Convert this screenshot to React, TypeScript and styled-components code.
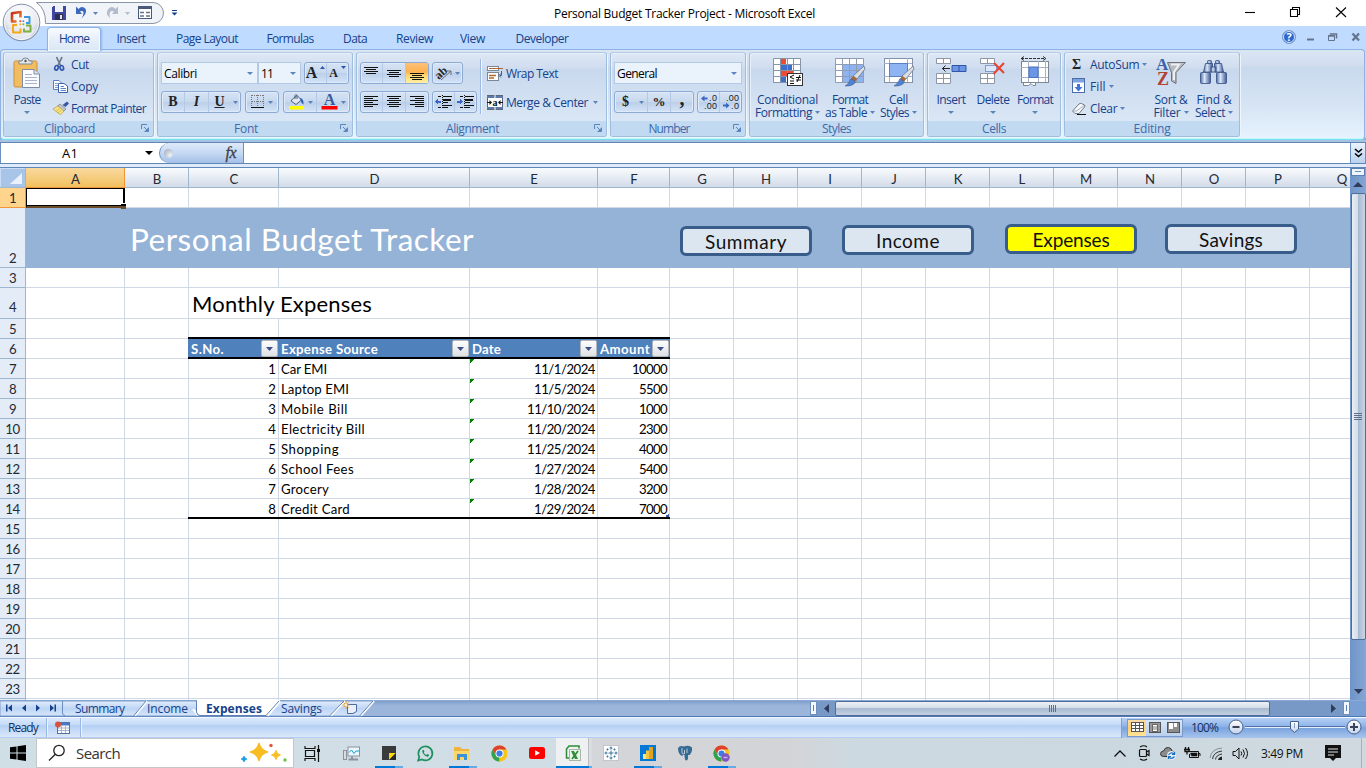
import React, { useLayoutEffect, useRef, useState } from "react";
import styled, { createGlobalStyle, css } from "styled-components";

const UI = `"Open Sans", "Noto Sans", sans-serif`;
const SHEET = `Lato, "Open Sans", sans-serif`;

const GlobalStyle = createGlobalStyle`
  * { box-sizing: border-box; }
  body { margin: 0; overflow: hidden; background: #fff; font-family: ${UI}; font-size: 12px; color: #15428b; }
  svg { display: block; flex: none; overflow: visible; }
`;

/* ---------- text that keeps to a fixed measure ---------- */
const FitSpan = styled.span`
  display: inline-block;
  white-space: pre;
  flex: none;
`;

function Fit({ w, children }: { w: number; children: string }) {
  const ref = useRef<HTMLSpanElement>(null);
  const [gap, setGap] = useState(0);
  useLayoutEffect(() => {
    if (ref.current) {
      const natural = ref.current.getBoundingClientRect().width;
      setGap((w - natural) / children.length);
    }
  }, []);
  return (
    <FitSpan ref={ref} style={{ letterSpacing: gap }}>
      {children}
    </FitSpan>
  );
}

const Window = styled.div`
  width: 1366px;
  height: 768px;
  display: flex;
  flex-direction: column;
  position: relative;
  overflow: hidden;
`;

/* ---------- title bar ---------- */
const TitleBar = styled.header`
  height: 26px;
  flex: none;
  display: flex;
  align-items: center;
  background: #fff;
`;
const QuickAccess = styled.div`
  width: 545px;
  height: 26px;
  padding-left: 35px;
`;
const Title = styled.div`
  flex: 1;
  color: #000;
  padding: 1px 0 0 9px;
`;
const WindowControls = styled.div`
  width: 122px;
  height: 26px;
`;
const OfficeOrb = styled.div`
  position: absolute;
  left: 2px;
  top: 3px;
`;

/* ---------- ribbon tabs ---------- */
const TabStrip = styled.nav`
  height: 23px;
  flex: none;
  background: #bfdbff;
  display: flex;
  align-items: stretch;
  padding-left: 47px;
`;
const Tab = styled.div<{ $w: number; $active?: boolean }>`
  width: ${(p) => p.$w}px;
  display: flex;
  align-items: center;
  justify-content: center;
  margin-top: 1px;
  padding-top: 1px;
  ${(p) =>
    p.$active &&
    css`
      border: 1px solid #8db2e3;
      border-bottom: 0;
      border-radius: 4px 4px 0 0;
      background: linear-gradient(#f8fbff, #e6effa 50%, #dbe7f6);
      box-shadow: inset 0 0 0 1px #f3fbff, 1px 0 2px #94b9e6;
      position: relative;
      height: 24px;
      z-index: 1;
      padding: 0 0 2px;
    `}
`;
const TabGap = styled.div`
  flex: 1;
`;
const MdiControls = styled.div`
  width: 90px;
`;

/* ---------- ribbon ---------- */
const RibbonArea = styled.div`
  height: 93px;
  flex: none;
  background: linear-gradient(#bfdbff 0 88px, #84a6cc 90px, #b2cbea 92px, #9fbadb);
  padding: 0 1px 0 0;
`;
const Ribbon = styled.div`
  height: 91px;
  border: 1px solid #8db2e3;
  border-bottom: 1px solid #7ae0ed;
  border-radius: 4px;
  background: linear-gradient(#dbe6f4 0, #cfddef 16px, #c9d9ed 17px, #d7e5f5 58px, #e7f4fe 90px);
  box-shadow: inset 0 -1px 0 #c5f7fc;
  display: flex;
  gap: 3px;
  padding: 2px 2px 0;
`;
const Group = styled.section<{ $w: number }>`
  width: ${(p) => p.$w}px;
  height: 85px;
  flex: none;
  border: 1px solid #9fbdde;
  border-top-color: #b7cbe2;
  border-radius: 3px;
  box-shadow: 1px 1px 0 #eef6fd, inset 1px 1px 0 #e6f0fa;
  background: linear-gradient(#dee8f5 0, #d0ddef 15px, #c8d8ed 16px, #d9e6f5 67px);
  display: flex;
  flex-direction: column;
`;
const GroupBody = styled.div<{ $pad?: string }>`
  height: 68px;
  display: flex;
  padding: ${(p) => p.$pad ?? "0"};
`;
const GroupLabel = styled.div<{ $launch?: boolean }>`
  height: 15px;
  background: #c1d9f1;
  color: #3e6aaa;
  display: flex;
  align-items: center;
  justify-content: center;
  position: relative;
  border-radius: 0 0 3px 3px;
  padding-right: ${(p) => (p.$launch ? 18 : 0)}px;
`;
const Launcher = styled.div`
  position: absolute;
  right: 4px;
  top: 3px;
`;
const Col = styled.div<{ $gap?: number; $pad?: string }>`
  display: flex;
  flex-direction: column;
  gap: ${(p) => p.$gap ?? 0}px;
  padding: ${(p) => p.$pad ?? "0"};
`;
const Row = styled.div<{ $gap?: number; $pad?: string }>`
  display: flex;
  gap: ${(p) => p.$gap ?? 0}px;
  padding: ${(p) => p.$pad ?? "0"};
`;
const BigButton = styled.div<{ $w: number }>`
  width: ${(p) => p.$w}px;
  flex: none;
  display: flex;
  flex-direction: column;
  align-items: center;
  padding-top: 4px;
`;
const BigIcon = styled.div`
  height: 36px;
  padding-top: 1px;
`;
const BigLine = styled.div`
  height: 13px;
  line-height: 13px;
  display: flex;
  align-items: center;
  gap: 3px;
  white-space: nowrap;
`;
const SmallButton = styled.div`
  height: 22px;
  display: flex;
  align-items: center;
  white-space: nowrap;
`;
const SmallIcon = styled.div<{ $w?: number }>`
  width: ${(p) => p.$w ?? 18}px;
`;
const Combo = styled.div<{ $w: number }>`
  width: ${(p) => p.$w}px;
  height: 22px;
  border: 1px solid #b3cae7;
  background: #eaf2fb;
  color: #000;
  display: flex;
  align-items: center;
  justify-content: space-between;
  padding: 0 4px 0 2px;
`;
const ButtonSet = styled.div`
  height: 22px;
  display: flex;
  border: 1px solid #8daad2;
  border-radius: 3px;
  background: linear-gradient(#d6e3f4, #c8d9ee 48%, #bccfe9 50%, #d3e3f8);
  box-shadow: inset 0 0 0 1px #dfeafa;
`;
const SetItem = styled.div<{ $w: number; $on?: boolean; $flat?: boolean }>`
  width: ${(p) => p.$w}px;
  display: flex;
  align-items: center;
  justify-content: center;
  gap: 3px;
  border-right: ${(p) => (p.$flat ? "0" : "1px solid #b4c9e6")};
  &:last-child { border-right: 0; }
  ${(p) => p.$on && css`background: linear-gradient(#fcc17a, #fdb04e 45%, #fed469 60%, #fff0a4);`}
`;
const Divider = styled.div`
  width: 1px;
  height: 55px;
  margin: 6px 6px 0 3px;
  background: #9dbbe0;
  box-shadow: 1px 0 0 #eef5fc;
`;
const Serif = styled.span<{ $size: number; $italic?: boolean; $u?: boolean; $lift?: number }>`
  font: ${(p) => (p.$italic ? "italic" : "normal")} bold ${(p) => p.$size}px "Liberation Serif", serif;
  color: #222;
  text-decoration: ${(p) => (p.$u ? "underline" : "none")};
  padding-bottom: ${(p) => p.$lift ?? 0}px;
`;

/* ---------- formula bar ---------- */
const FormulaBar = styled.div`
  height: 22px;
  flex: none;
  display: flex;
  border-top: 1px solid #5f86b6;
  border-bottom: 1px solid #5f86b6;
  background: #fff;
`;
const NameBox = styled.div`
  width: 159px;
  border-left: 1px solid #6a8fc0;
  display: flex;
  align-items: center;
  justify-content: flex-end;
  gap: 67px;
  padding-right: 6px;
  color: #000;
  font: 13px ${UI};
`;
const FxBox = styled.div`
  width: 85px;
  border: solid #6a8fc0;
  border-width: 0 1px 0 1px;
  border-radius: 11px 0 0 11px;
  background: linear-gradient(#dfeafa, #c5d9f3 50%, #a3c0e8);
  display: flex;
  align-items: center;
  justify-content: space-between;
  padding: 0 7px 0 4px;
`;
const Knob = styled.div`
  width: 9px;
  height: 9px;
  border-radius: 50%;
  background: radial-gradient(circle at 70% 70%, #eef3fa, #9aa5b5);
`;
const Fx = styled.span`
  font: italic 16px "Liberation Serif", serif;
  color: #3d3d45;
  letter-spacing: -0.5px;
  -webkit-text-stroke: 0.3px #3d3d45;
`;
const FormulaInput = styled.div`
  flex: 1;
`;
const Expand = styled.div`
  width: 16px;
  border: 1px solid #6a8fc0;
  border-width: 0 1px;
  background: linear-gradient(#eaf3fd, #b9d0ee);
  display: flex;
  align-items: center;
  justify-content: center;
`;
const Seam = styled.div`
  height: 4px;
  flex: none;
  background: #dfebf9;
  border-bottom: 1px solid #5f86b6;
`;

/* ---------- sheet ---------- */
const SheetArea = styled.main`
  height: 532px;
  flex: none;
  display: flex;
  overflow: hidden;
`;
const Sheet = styled.div`
  width: 1350px;
  background: #fff;
  color: #000;
  font: 13.2px ${SHEET};
  overflow: hidden;
`;
const SheetRow = styled.div<{ $h: number }>`
  display: flex;
  height: ${(p) => p.$h}px;
`;
const Corner = styled.div`
  width: 26px;
  height: 20px;
  flex: none;
  background: #a9c4e9;
  border: solid #9eb6ce;
  border-width: 0 1px 1px 0;
  box-shadow: inset 1px 1px 0 #c8dcf5;
  display: flex;
  justify-content: flex-end;
  padding: 5px 3px 0 0;
`;
const ColHead = styled.div<{ $w: number; $on?: boolean }>`
  width: ${(p) => p.$w}px;
  height: 20px;
  flex: none;
  border: solid ${(p) => (p.$on ? "#f29536" : "#9eb6ce")};
  border-width: 0 1px 1px 0;
  background: ${(p) => (p.$on ? "linear-gradient(#f9d99f, #f1c15f)" : "linear-gradient(#f9fcfd, #d3dbe9)")};
  color: #222a35;
  display: flex;
  align-items: center;
  justify-content: center;
  overflow: hidden;
  padding: 2px 0 0 1px;
`;
const RowHead = styled.div<{ $on?: boolean; $raise?: boolean }>`
  width: 26px;
  flex: none;
  border: solid #9eb6ce;
  border-width: 0 1px 1px 0;
  background: #e4ecf7;
  color: #222a35;
  display: flex;
  align-items: flex-end;
  justify-content: center;
  line-height: 17px;
  letter-spacing: -0.5px;
  padding-bottom: ${(p) => (p.$raise ? 2 : 0)}px;
  ${(p) => p.$on && css`background: #ffd58d; border-color: #f29536;`}
`;
const Cell = styled.div<{ $w: number; $right?: boolean; $last?: boolean }>`
  width: ${(p) => p.$w}px;
  flex: none;
  position: relative;
  border: solid #d0d7e5;
  border-width: 0 1px 1px 0;
  padding: 1px 2px 0;
  line-height: 19px;
  display: flex;
  white-space: nowrap;
  justify-content: ${(p) => (p.$right ? "flex-end" : "flex-start")};
  ${(p) =>
    p.$last &&
    css`
      &::before {
        content: "";
        position: absolute;
        inset: auto -1px -1px -1px;
        height: 2px;
        background: #000;
      }
    `}
`;
const Selected = styled.div`
  position: absolute;
  inset: 0 -1px -1px 0;
  border: 1px solid #000;
  border-right-width: 2px;
  border-bottom: 2px solid #6b4a24;
  box-shadow: inset 0 -1px 0 #000;
  z-index: 1;
  &::after {
    content: "";
    position: absolute;
    right: -3px;
    bottom: -3px;
    width: 5px;
    height: 5px;
    background: linear-gradient(#000 50%, #6b4a24 50%);
    border: solid #fff;
    border-width: 1px 0 0 0;
  }
`;
const Banner = styled.div`
  flex: 1;
  background: #95b3d7;
  display: flex;
  position: relative;
  align-items: flex-start;
  padding-left: 104px;
`;
const BannerTitle = styled.div`
  width: 550px;
  color: #fff;
  font: 31.5px/60px ${SHEET};
  padding-top: 1px;
`;
const NavButton = styled.div<{ $top: number; $gap: number; $on?: boolean }>`
  width: 132px;
  height: 30px;
  flex: none;
  margin: ${(p) => p.$top}px ${(p) => p.$gap}px 0 0;
  border: 3px solid #385d8a;
  border-radius: 6px;
  background: ${(p) => (p.$on ? "#ffff00" : "#dce6f1")};
  color: #111;
  font: 19px/25px ${SHEET};
  text-align: center;
`;
const Heading = styled.div`
  font: 22px/27px ${SHEET};
  padding: 1px 0 0 1px;
`;
const HeadCell = styled.div<{ $w: number; $first?: boolean }>`
  width: ${(p) => p.$w + (p.$first ? 1 : 0)}px;
  margin-left: ${(p) => (p.$first ? -1 : 0)}px;
  padding: 1px 1px 0 ${(p) => (p.$first ? 3 : 2)}px;
  flex: none;
  position: relative;
  height: 20px;
  background: #4f81bd;
  border-bottom: 2px solid #000;
  box-shadow: 0 -2px 0 #000;
  color: #fff;
  font-weight: bold;
  line-height: 19px;
  display: flex;
  justify-content: space-between;
  white-space: nowrap;
`;
const FilterButton = styled.div`
  width: 17px;
  height: 17px;
  flex: none;
  border: 1px solid #b3b6bb;
  border-radius: 2px;
  background: linear-gradient(#fff, #dcdfe4);
  display: flex;
  align-items: center;
  justify-content: center;
`;
const ErrorMark = styled.div`
  position: absolute;
  left: 0;
  top: 0;
  width: 5px;
  height: 5px;
  background: linear-gradient(135deg, #008000 50%, transparent 50%);
`;
const TableCorner = styled.div`
  position: absolute;
  right: 0;
  bottom: 1px;
  width: 3px;
  height: 3px;
  border: solid #3c55a5;
  border-width: 0 1px 2px 0;
`;

/* ---------- scroll bars ---------- */
const VScroll = styled.div`
  width: 16px;
  background: linear-gradient(90deg, #6f94c8, #86a6d4);
  display: flex;
  flex-direction: column;
  align-items: center;
`;
const SplitBox = styled.div`
  width: 14px;
  height: 8px;
  border: 1px solid #5b7fb2;
  background: #eef5fd;
  padding: 2px 3px;
  &::after { content: ""; display: block; height: 1px; background: #6a8fc0; }
`;
const Arrow = styled.div<{ $w: number; $h: number }>`
  width: ${(p) => p.$w}px;
  height: ${(p) => p.$h}px;
  display: flex;
  align-items: center;
  justify-content: center;
`;
const VThumb = styled.div`
  width: 15px;
  height: 447px;
  border: 1px solid #4f6d9c;
  border-radius: 2px;
  background: linear-gradient(90deg, #e8eef5, #d3dde9 45%, #a9bbd1 50%, #c8d6e6);
  display: flex;
  align-items: center;
  justify-content: center;
`;
const Spacer = styled.div`
  flex: 1;
`;

/* ---------- sheet tabs ---------- */
const SheetTabs = styled.div`
  height: 17px;
  flex: none;
  display: flex;
  background: linear-gradient(#7f9fcd, #9cb6db 5px, #9cb6db);
  border-bottom: 1px solid #4f76b2;
  border-top: 1px solid #8aa9d3;
`;
const TabDrawing = styled.div`
  width: 810px;
  height: 16px;
`;
const HScroll = styled.div`
  width: 540px;
  display: flex;
  background: #7898c5;
`;
const HSplit = styled.div`
  width: 7px;
  height: 14px;
  border: 1px solid #6a8fc0;
  background: #f3f8fe;
  padding: 3px 2px;
  &::after { content: ""; display: block; width: 1px; height: 6px; background: #5b7fb2; }
`;
const HThumb = styled.div`
  width: 435px;
  height: 15px;
  border: 1px solid #4f6d9c;
  border-radius: 2px;
  background: linear-gradient(#edf1f6, #d5dde8 45%, #a9bbd1 50%, #c3d0e0);
  display: flex;
  align-items: center;
  justify-content: center;
`;
const ScrollCorner = styled.div`
  width: 16px;
  background: #7a9fd4;
`;

/* ---------- status bar ---------- */
const StatusBar = styled.div`
  height: 21px;
  flex: none;
  display: flex;
  align-items: center;
  border-top: 1px solid #f2f8ff;
  border-bottom: 1px solid #b4cdf4;
  background: linear-gradient(#dbe9fd, #c5daf7 7px, #b3cff5 7px, #dbe8fa);
  color: #15305f;
`;
const StatusPart = styled.div<{ $w: number }>`
  width: ${(p) => p.$w}px;
  height: 19px;
  display: flex;
  align-items: center;
  padding-left: 8px;
  border-right: 1px solid #98b7e2;
  box-shadow: 1px 0 0 #eaf3fe;
`;
const StatusRight = styled.div`
  width: 245px;
  height: 20px;
  display: flex;
  align-items: center;
  border-left: 1px solid #7fa2d5;
  background: linear-gradient(#b6d0f5, #8fb4e8 40%, #7aa3dd 50%, #a7c5ee);
  padding-left: 5px;
`;
const ViewSet = styled.div`
  width: 56px;
  height: 18px;
  border: 1px solid #7a99c9;
  background: linear-gradient(#d9e6f8, #b9d0ee);
  display: flex;
`;
const View = styled.div<{ $on?: boolean }>`
  width: 18px;
  display: flex;
  align-items: center;
  justify-content: center;
  background: ${(p) => (p.$on ? "linear-gradient(#fbdca5, #ffcf72 50%, #ffe59b)" : "none")};
`;
const Zoom = styled.div`
  width: 45px;
  padding-left: 8px;
`;

/* ---------- taskbar ---------- */
const Taskbar = styled.footer`
  height: 30px;
  flex: none;
  display: flex;
  background: linear-gradient(90deg, #d0dfe5 0, #d1dde5 560px, #d3d5d9 600px, #d3d4d8 790px, #cdd9e0 850px, #cbd8e0 1100px, #d0d9df);
  color: #111;
`;
const StartButton = styled.div`
  width: 36px;
  display: flex;
  align-items: center;
  justify-content: center;
`;
const SearchBox = styled.div`
  width: 258px;
  height: 30px;
  border: 1px solid #c4c6c8;
  background: #fff;
  display: flex;
  align-items: center;
  font-size: 15px;
  padding: 0 5px 0 11px;
  color: #333;
`;
const SearchText = styled.div`
  flex: 1;
  padding-left: 10px;
`;
const TaskItem = styled.div<{ $on?: boolean; $line?: boolean }>`
  width: 37px;
  height: 30px;
  display: flex;
  align-items: center;
  justify-content: center;
  position: relative;
  &:nth-child(3) { margin-right: 2px; }
  ${(p) => p.$on && css`
    background: linear-gradient(90deg, transparent 1px, #eef0f2 1px 33px, #b9bcc0 33px 34px, #dadde0 34px);
  `}
  ${(p) => p.$line && css`
    &::after {
      content: "";
      position: absolute;
      bottom: 0;
      left: ${p.$on ? 1 : 5}px;
      width: ${p.$on ? 36 : 28}px;
      height: 2px;
      background: linear-gradient(90deg, #0078d7 ${p.$on ? 33 : 20}px, #66aae4 0);
    }
  `}
`;
const Tray = styled.div`
  flex: 1;
  display: flex;
  align-items: center;
  justify-content: flex-end;
`;
const TrayItem = styled.div<{ $w: number }>`
  width: ${(p) => p.$w}px;
  display: flex;
  justify-content: center;
`;
const ShowDesktop = styled.div`
  width: 5px;
  height: 30px;
  border-left: 1px solid #a9b1b7;
`;

/* ---------- small drawings ---------- */
const Caret = ({ c = "#5b83bd", w = 6, h = 3 }: { c?: string; w?: number; h?: number }) => (
  <svg width={w} height={h}>
    <path d={`M0 0H${w}L${w / 2} ${h}Z`} fill={c} />
  </svg>
);

const LaunchIcon = () => (
  <svg width="8" height="8" fill="none" stroke="#5c86bb">
    <path d="M.5 5V.5H6" />
    <path d="M3 3L6 6M3.500 7.500H7.500V3.500" />
    <path d="M4 7L7 4V7Z" fill="#5c86bb" stroke="none" />
  </svg>
);

const Lines = ({ rows, top = 0 }: { rows: [number, number][]; top?: number }) => (
  <svg width="15" height="14" shapeRendering="crispEdges">
    {rows.map(([x, w], i) => (
      <rect key={i} x={x} y={top + i * 2} width={w} height="1" fill="#111" />
    ))}
  </svg>
);

const OfficeLogo = () => (
  <svg width="39" height="39" viewBox="0 0 39 39">
    <defs>
      <radialGradient id="orb" cx=".5" cy=".25" r=".8">
        <stop offset="0" stopColor="#fff" />
        <stop offset=".6" stopColor="#e6e9ef" />
        <stop offset="1" stopColor="#9ba9c0" />
      </radialGradient>
      <linearGradient id="red" x2="1" y2="1">
        <stop offset="0" stopColor="#c22c14" />
        <stop offset="1" stopColor="#f4893a" />
      </linearGradient>
    </defs>
    <circle cx="19.500" cy="19.500" r="18.300" fill="url(#orb)" stroke="#8290a8" />
    <circle cx="19.500" cy="19.500" r="17" fill="none" stroke="#f5f7fa" />
    <path d="M5 25Q19 36 34 25Q29 37 19.500 37Q10 37 5 25Z" fill="#fff" opacity=".6" />
    <g fill="none" strokeLinejoin="round">
      <path d="M14.500 18.500H10V10.200L18.500 9V14.500" stroke="url(#red)" strokeWidth="2.600" />
      <path d="M22 14H27.500V20H24" stroke="#3f97da" strokeWidth="2" />
      <path d="M15 22H11V29.500H18.500V25.500" stroke="#f5a81c" strokeWidth="2" />
      <path d="M24 22.500H28.500V28.500H22V25.500" stroke="#7bb241" strokeWidth="2" />
    </g>
    <path d="M17.500 18.200H19.200" stroke="#d9461a" strokeWidth="1.700" />
    <path d="M20.500 18.200H22.200" stroke="#3f97da" strokeWidth="1.700" />
    <path d="M17.500 21.300H19.200" stroke="#f5a81c" strokeWidth="1.700" />
    <path d="M20.500 21.300H22.200" stroke="#7bb241" strokeWidth="1.700" />
  </svg>
);

const QuickBar = () => (
  <svg width="150" height="26">
    <path d="M1.500 2.500H118A10.500 10.500 0 0 1 118 23.500H10.500Q11 9 1.500 2.500Z" fill="#f0f3f8" stroke="#8b95a5" />
    <g shapeRendering="crispEdges">
      <path d="M18 6H31V20H17V7Z" fill="#4047a0" />
      <rect x="20" y="6" width="8" height="6" fill="#eef0fa" />
      <rect x="20" y="14" width="8" height="6" fill="#2d2f52" />
      <rect x="25" y="15" width="2" height="4" fill="#e3e6f5" />
    </g>
    <path d="M41 14V6.500L43.500 9Q46 6 49 7.500Q52.500 9.500 50 14.500L46.500 18.500Q50 12 47.500 11Q45.800 10.600 45 11.500L47 14Z" fill="#3c68be" />
    <path d="M58 12H63L60.500 15Z" fill="#5b83bd" />
    <path d="M83 14V6.500L80.500 9Q78 6 75 7.500Q71.500 9.500 72 14.500L75 18.500Q73.500 12 76.500 11Q78.200 10.600 79 11.500L77 14Z" fill="#b3bccb" />
    <path d="M90 12H95L92.500 15Z" fill="#b3bccb" />
    <rect x="103.500" y="6.500" width="13" height="12" fill="#fff" stroke="#4a587a" />
    <path d="M103 8H117" stroke="#4a587a" strokeWidth="2" />
    <path d="M105 12.500H109M111 12.500H115M105 16H109M111 16H115" stroke="#66728c" strokeWidth="1.500" />
    <path d="M137 10.500H142" stroke="#15428b" />
    <path d="M136.500 12.500H142.500L139.500 15.500Z" fill="#15428b" />
  </svg>
);

const PasteIcon = () => (
  <svg width="28" height="31">
    <rect x="1" y="3" width="23" height="26" rx="1.500" fill="#f1bd60" stroke="#c9913c" />
    <path d="M6 6V3H9Q9 0 12.500 0T16 3H19V6Z" fill="#e4e7eb" stroke="#7e8793" />
    <circle cx="12.500" cy="3" r="1.200" fill="#555" />
    <path d="M9.500 11.500H21L26.500 16V29.500H9.500Z" fill="#fbfcff" stroke="#7d8ba3" />
    <path d="M21 11.500V16H26.500" fill="#dfe6f3" stroke="#7d8ba3" />
    <path d="M12 16.500H19M12 19.500H24M12 22.500H24M12 25.500H24" stroke="#a8b5cd" />
  </svg>
);
const CutIcon = () => (
  <svg width="12" height="14" fill="none">
    <path d="M3.500 0L7.500 8.500M9 0L5 8.500" stroke="#6b7683" strokeWidth="1.700" />
    <ellipse cx="3.500" cy="10.800" rx="1.700" ry="2.300" stroke="#2f55ab" strokeWidth="1.600" transform="rotate(20 3.500 10.800)" />
    <ellipse cx="8.800" cy="10.800" rx="1.700" ry="2.300" stroke="#2f55ab" strokeWidth="1.600" transform="rotate(-20 8.800 10.800)" />
  </svg>
);
const CopyIcon = () => (
  <svg width="15" height="13">
    <path d="M.5.500H6L8.500 3V9.500H.5Z" fill="#fff" stroke="#5c80bd" />
    <path d="M2 3.500H5M2 5.500H5M2 7.500H5" stroke="#7d9fd6" />
    <path d="M5.500 3.500H11L14.500 6V12.500H5.500Z" fill="#fff" stroke="#3d63a9" />
    <path d="M7.500 6.500H11M7.500 8.500H13M7.500 10.500H13" stroke="#5c86cf" />
  </svg>
);
const PainterIcon = () => (
  <svg width="16" height="14">
    <path d="M9.500 4L14 .5L16 2.500L12.500 6Z" fill="#3d56a6" />
    <path d="M7 3L13 8L10.500 10.500L4.500 5Z" fill="#bfc5cf" stroke="#6b7380" strokeWidth=".6" />
    <path d="M5 5L11 10L7.500 13.800L0 8Z" fill="#f5e48c" stroke="#b79a3c" strokeWidth=".7" />
    <path d="M5 12L8.500 9M3 10.500L6.500 7.500" stroke="#d9b74a" />
  </svg>
);
const BorderIcon = () => (
  <svg width="14" height="14" shapeRendering="crispEdges">
    <path d="M.5.500H13M.5 6.500H13M.5 0V12M6.500 0V12M12.500 0V12" stroke="#777" strokeDasharray="1 1" fill="none" />
    <rect y="12" width="13" height="1" fill="#111" />
  </svg>
);
const FillIcon = () => (
  <svg width="17" height="16">
    <path d="M4.500 5L9 1.500L13.500 6L8 10.500L3 7Z" fill="#dfe7f3" stroke="#4d5d78" />
    <path d="M7 5V1.500Q8-.5 9 1.500V5" stroke="#4d5d78" fill="none" />
    <path d="M12 4Q16 4.500 15.500 10.500Q13 9 12.500 6Z" fill="#2d62ba" />
    <rect x="1" y="12" width="15" height="3.500" fill="#ff0" />
  </svg>
);
const ColorIcon = () => (
  <svg width="17" height="16">
    <text x="8.500" y="11" textAnchor="middle" fontFamily="Liberation Serif, serif" fontWeight="bold" fontSize="16" fill="#3a5a9e">A</text>
    <rect x=".5" y="12" width="16" height="3.500" fill="#f00" />
  </svg>
);
const OrientIcon = () => (
  <svg width="16" height="14">
    <text x="-1" y="10" fontFamily="Liberation Serif, serif" fontWeight="bold" fontSize="12" fill="#222" transform="rotate(-42 6 7)">ab</text>
    <path d="M5 14L15 5M15 5V9M15 5H11" stroke="#6c6c70" fill="none" />
  </svg>
);
const IndentIcon = ({ flip }: { flip?: boolean }) => (
  <svg width="16" height="14" shapeRendering="crispEdges">
    <path d="M2 1.500H5M7 1.500H16M7 7.500H12M7 10.500H16M2 12.500H5M7 12.500H12" stroke="#111" />
    <path d="M7 4H15V6H7Z" fill="#111" />
    <path d="M6.500 0V14" stroke="#111" strokeDasharray="1 1" />
    <path d={flip ? "M5 6.500L2 3V5.500H-1V7.500H2V10Z" : "M-1 6.500L2 3V5.500H5V7.500H2V10Z"} fill="#3b67c2" />
  </svg>
);
const WrapIcon = () => (
  <svg width="16" height="16">
    <rect x=".5" y="1.500" width="11" height="4" fill="#fff" stroke="#7d8794" />
    <path d="M2 3.500H16" stroke="#b0682f" />
    <rect x=".5" y="7.500" width="11" height="8" fill="#fff" stroke="#7d8794" />
    <path d="M2 10.500H9M2 13H7" stroke="#b0682f" strokeWidth="1.300" />
    <path d="M14.500 6V10.500H13M14 8.500L12 10.500L14 12.500" stroke="#3f5d94" fill="none" />
  </svg>
);
const MergeIcon = () => (
  <svg width="16" height="15">
    <rect x=".5" y=".5" width="15" height="14" fill="#fff" stroke="#5d6778" />
    <path d="M0 2H16M0 13H16" stroke="#5d7aa8" strokeWidth="2" />
    <path d="M8 0V3M8 12V15" stroke="#fff" />
    <path d="M0 7.500H4M12 7.500H16" stroke="#111" />
    <path d="M5 7.500L2.500 5V10ZM11 7.500L13.500 5V10Z" fill="#111" />
    <text x="8" y="11" fontSize="10" textAnchor="middle" fontFamily="Liberation Serif, serif" fontWeight="bold" fill="#111">a</text>
  </svg>
);
const DecimalIcon = ({ less }: { less?: boolean }) => (
  <svg width="16" height="14" fontFamily="Liberation Sans, sans-serif" fontSize="9" fill="#222">
    <text x={less ? 3 : 8} y="6" textLength={less ? 13 : 8}>{less ? ".00" : ".0"}</text>
    <text x={less ? 8 : 3} y="13.500" textLength={less ? 8 : 13}>{less ? ".0" : ".00"}</text>
    <path d={less ? "M0 9.500H3V7.500L6.500 10.500L3 13.500V11.500H0Z" : "M6.500 2.500H3.500V.5L0 3.500L3.500 6.500V4.500H6.500Z"} fill="#3b67c2" />
  </svg>
);

const gridLines = (w: number, h: number, cx: number, cy: number) => {
  let d = "";
  for (let i = 0; i <= cx; i++) d += `M${Math.round((w / cx) * i) + 0.5} .5V${h + 0.5}`;
  for (let j = 0; j <= cy; j++) d += `M.5 ${Math.round((h / cy) * j) + 0.5}H${w + 0.5}`;
  return d;
};
const Brush = () => (
  <g>
    <path d="M29 8L30 11L22 21L18 18Z" fill="#d9dde5" stroke="#6b7484" strokeWidth=".8" />
    <path d="M18 18L22 21L20 24L16 21Z" fill="#a86a32" />
    <path d="M16 20.500L20.500 24Q18 28.500 10 28Q14 26 16 20.500Z" fill="#4f83cf" stroke="#2e4f90" strokeWidth=".5" />
  </g>
);
const CondIcon = () => (
  <svg width="30" height="30">
    <rect x=".5" y=".5" width="27" height="24" fill="#fff" />
    <path d="M7 0H13V6H7Z M7 13H20V19H7Z" fill="#ee4b34" />
    <path d="M7 6H19V13H7Z M7 19H13V25H7Z" fill="#3f6dcc" />
    <path d={gridLines(27, 24, 4, 4)} stroke="#8795ab" fill="none" />
    <rect x="14.500" y="15.500" width="15" height="12" fill="#fff" stroke="#333" />
    <path d="M21 17L17 19L21 21M17 23H21M17 25.500H21M23 19.500H28M23 22H28M27 17L24 24" stroke="#111" fill="none" />
  </svg>
);
const TableIcon = () => (
  <svg width="30" height="30">
    <rect x=".5" y=".5" width="28" height="24" fill="#fff" />
    <path d="M7.500 6.500H28.500V24.500H7.500Z" fill="#8db3f0" />
    <path d={gridLines(28, 24, 4, 4)} stroke="#8f9cb3" fill="none" />
    <Brush />
  </svg>
);
const StylesIcon = () => (
  <svg width="30" height="30">
    <rect x=".5" y=".5" width="28" height="24" fill="#fff" stroke="#8391a8" />
    <path d="M5.500 0V24M23.500 0V24M0 5.500H28M0 18.500H28" stroke="#a8b2c4" />
    <rect x="5.500" y="5.500" width="18" height="13" fill="#8fb4f2" stroke="#5c80c4" />
    <Brush />
  </svg>
);
const InsertIcon = () => (
  <svg width="30" height="30">
    <path d="M.5.500H14.500V5.500H.5ZM7.500.500V5.500M.5 15.500H14.500V25.500H.5ZM7.500 15.500V25.500M.5 20.500H14.500" fill="#fff" stroke="#8d97a5" />
    <path d="M16 7.500H30V13.500H16ZM23 7.500V13.500" fill="#6b96e6" stroke="#2f55a8" />
    <path d="M6 10.500H14M9.500 7.500L6.500 10.500L9.500 13.500" stroke="#222" fill="none" />
  </svg>
);
const DeleteIcon = () => (
  <svg width="26" height="30">
    <path d="M.5.500H14.500V5.500H.5ZM7.500.500V5.500M.5 15.500H14.500V25.500H.5ZM7.500 15.500V25.500M.5 20.500H14.500" fill="#fff" stroke="#8d97a5" />
    <rect x="5.500" y="7.500" width="11" height="6" fill="#dce8fb" stroke="#2f55a8" strokeDasharray="1 1" />
    <path d="M14 5L24 15M24 5L13.500 16" stroke="#e8432e" strokeWidth="2" fill="none" />
  </svg>
);
const FormatIcon = () => (
  <svg width="30" height="30">
    <path d="M1 .5H26M4-1.500L1 .5L4 2.500M23-1.500L26 .5L23 2.500" stroke="#333" fill="none" strokeDasharray="3 1" />
    <path d="M3.500 24V27.500H8.500L11 25.500L13 27.500H15.500V24" fill="#fff" stroke="#7c8796" />
    <rect x="1.500" y="3.500" width="27" height="21" fill="#fff" stroke="#7c8796" />
    <path d="M8.500 3V24M18.500 3V24M25.500 3V24M1 9.500H28M1 19.500H28" stroke="#a8b2c4" />
    <rect x="9" y="9" width="9" height="10.500" fill="#6b96e6" stroke="#4a72c0" />
  </svg>
);
const FillDownIcon = () => (
  <svg width="13" height="16">
    <rect x=".5" y=".5" width="12" height="14" fill="#fff" stroke="#4b6da8" />
    <rect x="1" y="1" width="11" height="3.500" fill="#7da2de" />
    <path d="M5 6H8V9H10.500L6.500 13.500L2.500 9H5Z" fill="#3f74d6" />
  </svg>
);
const EraserIcon = () => (
  <svg width="15" height="13">
    <path d="M.5 9L7 2Q8 1 9.500 1.500L12.500 3Q13.500 4 12.500 5L7 11.500H3Z" fill="#f7f8fb" stroke="#6e7785" />
    <path d="M1 9L4.500 9L12 3.500" fill="none" stroke="#a5acb8" />
    <path d="M5 12.500H14" stroke="#111" />
  </svg>
);
const SortIcon = () => (
  <svg width="30" height="30" fontFamily="Liberation Serif, serif" fontWeight="bold">
    <text x="0" y="12" fontSize="17" fill="#3a5fa8">A</text>
    <text x="1" y="27" fontSize="18" fill="#b04236">Z</text>
    <path d="M11.500 4.500H29.500L20 14.500V25.500L15.500 23V14.500Z" fill="#b7bac0" stroke="#6e7278" />
    <path d="M15 6.500H23L18 14V22" stroke="#edeff2" strokeWidth="2" fill="none" />
  </svg>
);
const FindIcon = () => (
  <svg width="28" height="28" viewBox="0 -2 28 28">
    <defs>
      <linearGradient id="lens">
        <stop offset="0" stopColor="#4f6da8" />
        <stop offset=".4" stopColor="#dbe6f8" />
        <stop offset="1" stopColor="#3e5a96" />
      </linearGradient>
    </defs>
    <g fill="url(#lens)" stroke="#344d82" strokeWidth=".8">
      <rect x="7.500" y=".5" width="4" height="3" rx="1" />
      <rect x="15.500" y=".5" width="4" height="3" rx="1" />
      <path d="M5.500 3.500H12.500V12H3.500Z" />
      <path d="M14.500 3.500H21.500L23.500 12H14.500Z" />
      <rect x=".5" y="12.500" width="10" height="11" rx="1" />
      <rect x="16.500" y="12.500" width="10" height="11" rx="1" />
      <rect x="11" y="7" width="5" height="5" />
    </g>
  </svg>
);
const CaptionButtons = () => (
  <svg width="122" height="26" fill="none" stroke="#000" strokeWidth="1.100">
    <path d="M1 12.500H11" />
    <path d="M46.500 9.500H53.500V16.500H46.500ZM48.500 9V7.500H55.500V14.500H54" />
    <path d="M92 7.500L102 17M102 7.500L92 17" />
  </svg>
);
const MdiButtons = () => (
  <svg width="90" height="22">
    <circle cx="13" cy="11" r="6.500" fill="#2c67cf" stroke="#7f9cc9" />
    <circle cx="13" cy="11" r="5.500" fill="none" stroke="#d6e5fb" />
    <text x="13" y="15" fontSize="11" fontWeight="bold" textAnchor="middle" fill="#fff" fontFamily="Open Sans, sans-serif">?</text>
    <g stroke="#64748c" fill="none">
      <path d="M31 13.500H38" strokeWidth="2" />
      <path d="M52.500 9.500H58.500V14.500H52.500Z" />
      <path d="M54 8H60.500V12.500M54.500 8.500V7.500M52 10H59" strokeWidth="1.500" />
      <path d="M76.500 7.500L83 14.500M83 7.500L76.500 14.500" strokeWidth="2.200" />
    </g>
  </svg>
);

const TabsArt = () => (
  <svg width="810" height="16" fontFamily="Open Sans, sans-serif">
    <defs>
      <linearGradient id="tab" x2="0" y2="1">
        <stop offset="0" stopColor="#e2edfb" />
        <stop offset=".5" stopColor="#bdd5f4" />
        <stop offset="1" stopColor="#d6e6fa" />
      </linearGradient>
    </defs>
    <path d="M0 0H374L361 15H0Z" fill="url(#tab)" stroke="#7f9fcd" />
    <g fill="#15428b">
      <path d="M6 3.500h1.500v7H6zM12 3.500v7l-4-3.500zM26 3.500v7l-4-3.500zM36 3.500v7l4-3.500zM50 3.500v7l4-3.500zM54.500 3.500h1.500v7H54.500z" />
    </g>
    <path d="M62.500 0V12Q62.500 14.500 65 14.500" fill="none" stroke="#6d8dbd" />
    <path d="M147 0L135 14.500M193 8L198 14.500M280 0L268 14.500M345 0L331 14.500M374 0L361 14.500" stroke="#fff" strokeWidth="2" />
    <path d="M146 0L134 14.500M344 0L330 14.500M373 0L360 14.500" stroke="#5f80b4" fill="none" />
    <path d="M197-1H280L268 14.500H201Q198 14.500 197 11Z" fill="#fff" />
    <path d="M196.500 0V11Q197 14.500 200 14.500H266L279 0" fill="none" stroke="#5f80b4" />
    <g fontSize="12" fill="#15428b">
      <text x="75" y="12" textLength="50">Summary</text>
      <text x="147" y="12" textLength="41">Income</text>
      <text x="206" y="12" textLength="56" fontWeight="bold">Expenses</text>
      <text x="281" y="12" textLength="41">Savings</text>
    </g>
    <path d="M347.500 3.500H356.500V10.500L353 12.500H347.500Z" fill="#e8eff9" stroke="#4d6a9e" />
    <path d="M346 0V8M342.500 4H349.500M343.500 1.500L348.500 6.500M348.500 1.500L343.500 6.500" stroke="#e89c2a" />
    <circle cx="346" cy="4" r="1.300" fill="#fff6d8" />
  </svg>
);

const MacroIcon = () => (
  <svg width="16" height="14">
    <rect x="2.500" y="1.500" width="12" height="11" fill="#fff" stroke="#5373a8" />
    <rect x="3" y="2" width="11" height="2.500" fill="#4a78c8" />
    <path d="M3 7H14M3 9.500H14M6.500 5V12M10.500 5V12" stroke="#9fb3d4" />
    <circle cx="3" cy="3.500" r="3" fill="#d8533b" />
  </svg>
);
const ZoomSlider = () => (
  <svg width="138" height="19">
    <defs>
      <linearGradient id="knob" x2="0" y2="1">
        <stop offset="0" stopColor="#fff" />
        <stop offset="1" stopColor="#c2d2ea" />
      </linearGradient>
    </defs>
    <path d="M17 9.500H117" stroke="#e4eefb" />
    <path d="M17 8.500H117" stroke="#4d70ab" />
    <g fill="url(#knob)" stroke="#44608f">
      <circle cx="8" cy="9" r="7" />
      <circle cx="126" cy="9" r="7" />
      <path d="M62.500 3.500H70.500V11L66.500 14.500L62.500 11Z" />
    </g>
    <path d="M4.500 9H11.500M122 9H130M126 5V13" stroke="#39445c" strokeWidth="2" />
    <path d="M66.500 5V10" stroke="#8a9cbd" />
  </svg>
);

const SearchArt = () => (
  <svg width="18" height="18" fill="none" stroke="#222" strokeWidth="1.300">
    <circle cx="11" cy="6.500" r="5.200" />
    <path d="M7.300 10.200L1 16.500" />
  </svg>
);
const star = (x: number, y: number, r: number) =>
  `M${x} ${y - r}Q${x + r * 0.2} ${y - r * 0.2} ${x + r} ${y}Q${x + r * 0.2} ${y + r * 0.2} ${x} ${y + r}Q${x - r * 0.2} ${y + r * 0.2} ${x - r} ${y}Q${x - r * 0.2} ${y - r * 0.2} ${x} ${y - r}Z`;
const Sparkles = () => (
  <svg width="48" height="22">
    <path d={star(19, 10, 8.5)} fill="#f8bd20" stroke="#f8bd20" strokeWidth="1.500" strokeLinejoin="round" />
    <path d={star(36, 13, 4.5)} fill="#f8bd20" stroke="#f8bd20" />
    <path d={star(4, 17, 2.800)} fill="#1d9de4" stroke="#1d9de4" />
    <circle cx="31" cy="3.500" r="1.700" fill="#e8543a" />
    <circle cx="45" cy="18" r="1.700" fill="#6cbf4a" />
  </svg>
);
const ChromeIcon = ({ badge }: { badge?: boolean }) => (
  <svg width="17" height="17" viewBox="0 0 17 17">
    <circle cx="8.500" cy="8.500" r="8" fill="#f8c417" />
    <path d="M1.570 4.500A8 8 0 0 1 15.430 4.500L8.500 4.500L5 10.500Z" fill="#e0402f" />
    <path d="M1.570 4.500L5.040 10.500L8.500 12.500L8.500 12.500L8.500 16.500A8 8 0 0 1 1.570 4.500Z" fill="#2fa350" />
    <path d="M8.500 16.500L12 10.500L8.500 12Z" fill="#f8c417" />
    <circle cx="8.500" cy="8.500" r="4" fill="#fff" />
    <circle cx="8.500" cy="8.500" r="3.100" fill="#3c7de6" />
    {badge && (
      <>
        <circle cx="12.500" cy="12.500" r="4.200" fill="#7e57c2" />
        <path d="M10.500 12.500H14.500" stroke="#c7b3ea" strokeWidth="1.500" />
      </>
    )}
  </svg>
);
const taskIcons: { art: React.ReactNode; on?: boolean; line?: boolean }[] = [
  {
    art: (
      <svg width="17" height="17" fill="none" stroke="#111" strokeWidth="1.200">
        <path d="M1 1V3.500H11V1M1 16V13.500H11V16M1.500 5.500H10.500V11.500H1.500ZM14.500 0V17" />
        <rect x="13" y="4" width="3" height="3" fill="#111" stroke="none" />
      </svg>
    ),
  },
  {
    art: (
      <svg width="17" height="15" fill="none">
        <rect x=".5" y="4.500" width="3" height="9" fill="#ddd" stroke="#8b9299" />
        <rect x="5" y="1" width="11.500" height="9" fill="#e9f7fd" stroke="#8b9299" />
        <path d="M6 6.500L8.500 4L11 7.500L13 5H16" stroke="#1b9fd8" />
        <path d="M9 10.500V12.500M5.500 13.500H15" stroke="#8b9299" strokeWidth="2" />
      </svg>
    ),
  },
  {
    line: true,
    art: (
      <svg width="14" height="14">
        <rect width="14" height="14" fill="#3a3a3a" />
        <path d="M7 14V7H14Z" fill="#fbd90e" />
        <path d="M7 14H14V7Z" fill="#2a2a2a" />
      </svg>
    ),
  },
  {
    art: (
      <svg width="17" height="17" fill="none">
        <path d="M1.200 15.500L2.300 11.800A7 7 0 1 1 5 14.500Z" stroke="#1f8f5f" strokeWidth="1.700" />
        <path d="M5.800 4.800Q4.500 6 5.800 8.200Q8 11.500 10.500 11.700Q12.500 11.300 12 9.800L10.300 9L9.300 10Q7.500 9.300 6.800 7.600L7.400 6.700L6.800 4.900Z" fill="#1f8f5f" />
      </svg>
    ),
  },
  {
    line: true,
    art: (
      <svg width="17" height="15">
        <path d="M0 1H6L8 3H15V14H0Z" fill="#efb440" />
        <path d="M0 5H16V14H0Z" fill="#fbd66d" />
        <path d="M3 14V8H13V14H10V11H6V14Z" fill="#3a92dc" />
      </svg>
    ),
  },
  { art: <ChromeIcon /> },
  {
    art: (
      <svg width="16" height="12">
        <rect width="16" height="12" rx="2.500" fill="#f00" />
        <path d="M6.200 3.200V8.800L11 6Z" fill="#fff" />
      </svg>
    ),
  },
  {
    on: true,
    line: true,
    art: (
      <svg width="17" height="17" fill="none">
        <path d="M1.500 4L4 1H14V3.500M1.500 3.500V13H4" stroke="#2f8a3a" strokeWidth="1.500" />
        <rect x="4.500" y="4.500" width="11" height="11" fill="#eaf3e8" stroke="#a8b8a6" />
        <path d="M6 6H9L13 14H10Z" fill="#2f8a3a" />
        <path d="M13 6L7 14" stroke="#2f8a3a" strokeWidth="1.700" />
      </svg>
    ),
  },
  {
    art: (
      <svg width="16" height="16" stroke="#38759c" fill="none">
        <rect x=".5" y=".5" width="15" height="15" fill="#fff" stroke="#c2c6ca" />
        <path d="M8 5.500V10.500M5.500 8H10.500M8 1.500V4.500M6.500 3H9.500M8 11.500V14.500M6.500 13H9.500M1.500 8H4.500M3 6.500V9.500M11.500 8H14.500M13 6.500V9.500M4.500 3.500V5.500M3.500 4.500H5.500M11.500 3.500V5.500M10.500 4.500H12.500M4.500 10.500V12.500M3.500 11.500H5.500M11.500 10.500V12.500M10.500 11.500H12.500" />
      </svg>
    ),
  },
  {
    line: true,
    art: (
      <svg width="16" height="16">
        <rect width="16" height="16" fill="#0078d7" />
        <rect x="3" y="9" width="5" height="5" fill="#fbe08a" />
        <rect x="6" y="5.500" width="4" height="8.500" fill="#f3c544" />
        <rect x="9" y="2" width="4" height="12" fill="#e0a41c" />
      </svg>
    ),
  },
  {
    art: (
      <svg width="16" height="16">
        <path d="M1 3Q3 0 7 1.500Q12-.5 15 2.500Q15.500 7 12.500 10H11Q11.500 15 9.500 15.500Q7.500 15.500 7.500 10H6L5 11Q1 9 1 3Z" fill="#356a93" />
        <path d="M5 3V8Q5.500 9.500 7 9M10 3.500V8M7.500 5V9" stroke="#c9d6e2" strokeWidth=".9" fill="none" />
      </svg>
    ),
  },
  { line: true, art: <ChromeIcon badge /> },
];

/* ---------- data ---------- */
const columns: [string, number][] = [
  ["A", 99], ["B", 64], ["C", 90], ["D", 191], ["E", 128], ["F", 72],
  ["G", 64], ["H", 64], ["I", 64], ["J", 64], ["K", 64], ["L", 64], ["M", 64], ["N", 64], ["O", 64], ["P", 64], ["Q", 64],
];
const expenses: [string, number, string, number, number][] = [
  ["Car EMI", 46, "11/1/2024", 61, 10000],
  ["Laptop EMI", 68, "11/5/2024", 61, 5500],
  ["Mobile Bill", 67, "11/10/2024", 68, 1000],
  ["Electricity Bill", 84, "11/20/2024", 68, 2300],
  ["Shopping", 58, "11/25/2024", 68, 4000],
  ["School Fees", 73, "1/27/2024", 61, 5400],
  ["Grocery", 48, "1/28/2024", 61, 3200],
  ["Credit Card", 69, "1/29/2024", 61, 7000],
];
const tabs: [string, number, number][] = [
  ["Home", 54, 30], ["Insert", 60, 29], ["Page Layout", 92, 62], ["Formulas", 74, 47],
  ["Data", 56, 24], ["Review", 63, 37], ["View", 53, 25], ["Developer", 86, 53],
];

const BlankCells = ({ from = 0 }: { from?: number }) => (
  <>{columns.slice(from).map(([n, w]) => <Cell key={n} $w={w} />)}</>
);

function DataRow({ index }: { index: number }) {
  const [name, nw, date, dw, amount] = expenses[index];
  const last = index === expenses.length - 1;
  return (
    <>
      <Cell $w={99} /><Cell $w={64} />
      <Cell $w={90} $right $last={last}>{index + 1}</Cell>
      <Cell $w={191} $last={last}><Fit w={nw}>{name}</Fit></Cell>
      <Cell $w={128} $right $last={last}><ErrorMark /><Fit w={dw}>{date}</Fit></Cell>
      <Cell $w={72} $right $last={last}>
        <Fit w={amount > 9999 ? 35 : 28}>{String(amount)}</Fit>
        {last && <TableCorner />}
      </Cell>
      <BlankCells from={6} />
    </>
  );
}

const Filter = () => <FilterButton><Caret c="#3f4f8c" w={7} h={4} /></FilterButton>;

function RowContent({ n }: { n: number }) {
  if (n === 1) return <><Cell $w={99}><Selected /></Cell><BlankCells from={1} /></>;
  if (n === 2)
    return (
      <Banner>
        <BannerTitle><Fit w={344}>Personal Budget Tracker</Fit></BannerTitle>
        <NavButton $top={18} $gap={30}><Fit w={82}>Summary</Fit></NavButton>
        <NavButton $top={17} $gap={31}><Fit w={64}>Income</Fit></NavButton>
        <NavButton $top={16} $gap={28} $on><Fit w={77}>Expenses</Fit></NavButton>
        <NavButton $top={16} $gap={0}><Fit w={64}>Savings</Fit></NavButton>
      </Banner>
    );
  if (n === 4)
    return (
      <>
        <Cell $w={99} /><Cell $w={64} />
        <Cell $w={281}><Heading><Fit w={180}>Monthly Expenses</Fit></Heading></Cell>
        <BlankCells from={4} />
      </>
    );
  if (n === 6)
    return (
      <>
        <Cell $w={99} /><Cell $w={64} />
        <HeadCell $w={90} $first><Fit w={33}>S.No.</Fit><Filter /></HeadCell>
        <HeadCell $w={191}><Fit w={97}>Expense Source</Fit><Filter /></HeadCell>
        <HeadCell $w={128}><Fit w={29}>Date</Fit><Filter /></HeadCell>
        <HeadCell $w={72}><Fit w={50}>Amount</Fit><Filter /></HeadCell>
        <BlankCells from={6} />
      </>
    );
  if (n >= 7 && n <= 14) return <DataRow index={n - 7} />;
  return <BlankCells />;
}

export default function App() {
  return (
    <Window>
      <GlobalStyle />
      <TitleBar>
        <QuickAccess><QuickBar /></QuickAccess>
        <Title><Fit w={261}>Personal Budget Tracker Project - Microsoft Excel</Fit></Title>
        <WindowControls><CaptionButtons /></WindowControls>
      </TitleBar>
      <TabStrip>
        {tabs.map(([t, w, tw], i) => <Tab key={t} $w={w} $active={i === 0}><Fit w={tw}>{t}</Fit></Tab>)}
        <TabGap />
        <MdiControls><MdiButtons /></MdiControls>
      </TabStrip>
      <OfficeOrb><OfficeLogo /></OfficeOrb>

      <RibbonArea>
        <Ribbon>
          <Group $w={151}>
            <GroupBody $pad="0 0 0 2px">
              <BigButton $w={42}>
                <BigIcon><PasteIcon /></BigIcon>
                <BigLine><Fit w={27}>Paste</Fit></BigLine>
                <BigLine><Caret /></BigLine>
              </BigButton>
              <Col $pad="0 0 0 5px">
                <SmallButton><SmallIcon><CutIcon /></SmallIcon><Fit w={18}>Cut</Fit></SmallButton>
                <SmallButton><SmallIcon><CopyIcon /></SmallIcon><Fit w={27}>Copy</Fit></SmallButton>
                <SmallButton><SmallIcon><PainterIcon /></SmallIcon><Fit w={75}>Format Painter</Fit></SmallButton>
              </Col>
            </GroupBody>
            <GroupLabel $launch><Fit w={51}>Clipboard</Fit><Launcher><LaunchIcon /></Launcher></GroupLabel>
          </Group>

          <Group $w={196}>
            <GroupBody>
              <Col $gap={7} $pad="9px 0 0 3px">
                <Row>
                  <Combo $w={97}><Fit w={33}>Calibri</Fit><Caret /></Combo>
                  <Combo $w={43}><Fit w={12}>11</Fit><Caret /></Combo>
                  <Row $pad="0 0 0 3px">
                    <ButtonSet>
                      <SetItem $w={22}><Serif $size={16}>A</Serif><svg width="5" height="14"><path d="M0 3H5L2.500 0Z" fill="#2f55a8" /></svg></SetItem>
                      <SetItem $w={21}><Serif $size={12}>A</Serif><svg width="5" height="14"><path d="M0 0H5L2.500 3Z" fill="#2f55a8" /></svg></SetItem>
                    </ButtonSet>
                  </Row>
                </Row>
                <Row $gap={4}>
                  <ButtonSet>
                    <SetItem $w={23}><Serif $size={14}>B</Serif></SetItem>
                    <SetItem $w={24}><Serif $size={14} $italic>I</Serif></SetItem>
                    <SetItem $w={21} $flat><Serif $size={14} $u>U</Serif></SetItem>
                    <SetItem $w={10}><Caret w={5} /></SetItem>
                  </ButtonSet>
                  <ButtonSet><SetItem $w={32}><BorderIcon /><Caret w={5} /></SetItem></ButtonSet>
                  <ButtonSet>
                    <SetItem $w={33}><FillIcon /><Caret w={5} /></SetItem>
                    <SetItem $w={32}><ColorIcon /><Caret w={5} /></SetItem>
                  </ButtonSet>
                </Row>
              </Col>
            </GroupBody>
            <GroupLabel $launch><Fit w={24}>Font</Fit><Launcher><LaunchIcon /></Launcher></GroupLabel>
          </Group>

          <Group $w={251}>
            <GroupBody>
              <Col $gap={7} $pad="9px 0 0 3px">
                <Row $gap={3}>
                  <ButtonSet>
                    <SetItem $w={22}><Lines top={1} rows={[[0, 14], [2, 10], [0, 14], [2, 10]]} /></SetItem>
                    <SetItem $w={23}><Lines top={4} rows={[[0, 14], [2, 10], [0, 14], [2, 10]]} /></SetItem>
                    <SetItem $w={22} $on><Lines top={7} rows={[[0, 14], [2, 10], [0, 14], [2, 10]]} /></SetItem>
                  </ButtonSet>
                  <ButtonSet><SetItem $w={29}><OrientIcon /><Caret w={5} /></SetItem></ButtonSet>
                </Row>
                <Row $gap={3}>
                  <ButtonSet>
                    <SetItem $w={22}><Lines top={1} rows={[[0, 14], [0, 9], [0, 14], [0, 9], [0, 14], [0, 9]]} /></SetItem>
                    <SetItem $w={23}><Lines top={1} rows={[[0, 14], [2, 10], [0, 14], [2, 10], [0, 14], [2, 10]]} /></SetItem>
                    <SetItem $w={22}><Lines top={1} rows={[[0, 14], [5, 9], [0, 14], [5, 9], [0, 14], [5, 9]]} /></SetItem>
                  </ButtonSet>
                  <ButtonSet>
                    <SetItem $w={22}><IndentIcon /></SetItem>
                    <SetItem $w={21}><IndentIcon flip /></SetItem>
                  </ButtonSet>
                </Row>
              </Col>
              <Divider />
              <Col $gap={7} $pad="9px 0 0 0">
                <SmallButton><SmallIcon $w={19}><WrapIcon /></SmallIcon><Fit w={52}>Wrap Text</Fit></SmallButton>
                <SmallButton><SmallIcon $w={19}><MergeIcon /></SmallIcon><Row $gap={5}><Fit w={82}>Merge &amp; Center</Fit><svg width="6" height="16"><path d="M0 7H5L2.500 10Z" fill="#5b83bd" /></svg></Row></SmallButton>
              </Col>
            </GroupBody>
            <GroupLabel $launch><Fit w={53}>Alignment</Fit><Launcher><LaunchIcon /></Launcher></GroupLabel>
          </Group>

          <Group $w={136}>
            <GroupBody>
              <Col $gap={7} $pad="9px 0 0 3px">
                <Combo $w={128}><Fit w={40}>General</Fit><Caret /></Combo>
                <Row $gap={3}>
                  <ButtonSet>
                    <SetItem $w={21} $flat><Serif $size={14}>$</Serif></SetItem>
                    <SetItem $w={12}><Caret w={5} /></SetItem>
                    <SetItem $w={23}><Serif as="span" $size={13}>%</Serif></SetItem>
                    <SetItem $w={22}><Serif $size={20} $lift={8}>,</Serif></SetItem>
                  </ButtonSet>
                  <ButtonSet>
                    <SetItem $w={22}><DecimalIcon /></SetItem>
                    <SetItem $w={21}><DecimalIcon less /></SetItem>
                  </ButtonSet>
                </Row>
              </Col>
            </GroupBody>
            <GroupLabel $launch><Fit w={41}>Number</Fit><Launcher><LaunchIcon /></Launcher></GroupLabel>
          </Group>

          <Group $w={175}>
            <GroupBody $pad="0 0 0 3px">
              <BigButton $w={69}>
                <BigIcon><CondIcon /></BigIcon>
                <BigLine><Fit w={61}>Conditional</Fit></BigLine>
                <BigLine><Fit w={57}>Formatting</Fit><Caret w={5} /></BigLine>
              </BigButton>
              <BigButton $w={56}>
                <BigIcon><TableIcon /></BigIcon>
                <BigLine><Fit w={36}>Format</Fit></BigLine>
                <BigLine><Fit w={42}>as Table</Fit><Caret w={5} /></BigLine>
              </BigButton>
              <BigButton $w={41}>
                <BigIcon><StylesIcon /></BigIcon>
                <BigLine><Fit w={19}>Cell</Fit></BigLine>
                <BigLine><Fit w={29}>Styles</Fit><Caret w={5} /></BigLine>
              </BigButton>
            </GroupBody>
            <GroupLabel><Fit w={29}>Styles</Fit></GroupLabel>
          </Group>

          <Group $w={134}>
            <GroupBody $pad="0 0 0 2px">
              <BigButton $w={42}><BigIcon><InsertIcon /></BigIcon><BigLine><Fit w={29}>Insert</Fit></BigLine><BigLine><Caret /></BigLine></BigButton>
              <BigButton $w={42}><BigIcon><DeleteIcon /></BigIcon><BigLine><Fit w={33}>Delete</Fit></BigLine><BigLine><Caret /></BigLine></BigButton>
              <BigButton $w={42}><BigIcon><FormatIcon /></BigIcon><BigLine><Fit w={36}>Format</Fit></BigLine><BigLine><Caret /></BigLine></BigButton>
            </GroupBody>
            <GroupLabel><Fit w={24}>Cells</Fit></GroupLabel>
          </Group>

          <Group $w={176}>
            <GroupBody>
              <Col $pad="0 0 0 7px">
                <SmallButton><SmallIcon><Serif $size={14}>Σ</Serif></SmallIcon><Fit w={52}>AutoSum </Fit><Caret w={5} /></SmallButton>
                <SmallButton><SmallIcon><FillDownIcon /></SmallIcon><Fit w={19}>Fill </Fit><Caret w={5} /></SmallButton>
                <SmallButton><SmallIcon><EraserIcon /></SmallIcon><Fit w={30}>Clear </Fit><Caret w={5} /></SmallButton>
              </Col>
              <Row $pad="0 0 0 1px">
                <BigButton $w={46}><BigIcon><SortIcon /></BigIcon><BigLine><Fit w={33}>Sort &amp;</Fit></BigLine><BigLine><Fit w={27}>Filter</Fit><Caret w={5} /></BigLine></BigButton>
                <BigButton $w={40}><BigIcon><FindIcon /></BigIcon><BigLine><Fit w={35}>Find &amp;</Fit></BigLine><BigLine><Fit w={30}>Select</Fit><Caret w={5} /></BigLine></BigButton>
              </Row>
            </GroupBody>
            <GroupLabel><Fit w={37}>Editing</Fit></GroupLabel>
          </Group>
        </Ribbon>
      </RibbonArea>

      <FormulaBar>
        <NameBox><Fit w={16}>A1</Fit><Caret c="#000" w={8} h={4} /></NameBox>
        <FxBox><Knob /><Fx>fx</Fx></FxBox>
        <FormulaInput />
        <Expand><svg width="9" height="10" fill="none" stroke="#000" strokeWidth="1.600"><path d="M1 1L4.500 4L8 1M1 5.500L4.500 8.500L8 5.500" /></svg></Expand>
      </FormulaBar>
      <Seam />

      <SheetArea>
        <Sheet>
          <SheetRow $h={20}>
            <Corner><svg width="12" height="11"><path d="M12 0V11H0Z" fill="#e9f1fb" /></svg></Corner>
            {columns.map(([n, w], i) => <ColHead key={n} $w={w} $on={i === 0}>{n}</ColHead>)}
          </SheetRow>
          {Array.from({ length: 24 }, (_, i) => i + 1).map((n) => (
            <SheetRow key={n} $h={n === 2 ? 60 : n === 4 ? 31 : 20}>
              <RowHead $on={n === 1} $raise={n === 4}>{n < 24 ? n : null}</RowHead>
              <RowContent n={n} />
            </SheetRow>
          ))}
        </Sheet>
        <VScroll>
          <SplitBox />
          <Arrow $w={16} $h={17}><svg width="10" height="5"><path d="M0 5H10L5 0Z" fill="#303c5c" /></svg></Arrow>
          <VThumb><svg width="8" height="7"><path d="M0 .5H8M0 2.500H8M0 4.500H8M0 6.500H8" stroke="#5f6f87" /></svg></VThumb>
          <Spacer />
          <Arrow $w={16} $h={17}><Caret c="#303c5c" w={9} h={5} /></Arrow>
        </VScroll>
      </SheetArea>

      <SheetTabs>
        <TabDrawing><TabsArt /></TabDrawing>
        <HScroll>
          <HSplit />
          <Arrow $w={18} $h={14}><svg width="5" height="9"><path d="M5 0V9L0 4.500Z" fill="#303c5c" /></svg></Arrow>
          <HThumb><svg width="8" height="7"><path d="M.5 0V7M2.500 0V7M4.500 0V7M6.500 0V7" stroke="#5f6f87" /></svg></HThumb>
          <Spacer />
          <Arrow $w={19} $h={14}><svg width="5" height="9"><path d="M0 0V9L5 4.500Z" fill="#303c5c" /></svg></Arrow>
          <HSplit />
        </HScroll>
        <ScrollCorner />
      </SheetTabs>

      <StatusBar>
        <StatusPart $w={47}><Fit w={30}>Ready</Fit></StatusPart>
        <StatusPart $w={34}><MacroIcon /></StatusPart>
        <Spacer />
        <StatusRight>
          <ViewSet>
            <View $on><svg width="13" height="11"><rect x=".5" y=".5" width="12" height="9" fill="#fff" stroke="#555" /><path d="M0 3.500H13M0 6.500H13M4.500 0V10M8.500 0V10" stroke="#555" /></svg></View>
            <View><svg width="12" height="11"><rect x=".5" y=".5" width="11" height="10" fill="#999" stroke="#555" /><rect x="3.500" y="2.500" width="5" height="7" fill="#fff" stroke="#666" /><path d="M4 5H8M4 7H8" stroke="#777" /></svg></View>
            <View><svg width="13" height="11"><rect x=".5" y=".5" width="12" height="10" fill="#8d8d8d" stroke="#555" /><path d="M2 1H6V7H2ZM7 1H10V5H7Z" fill="#fff" /></svg></View>
          </ViewSet>
          <Zoom><Fit w={27}>100%</Fit></Zoom>
          <ZoomSlider />
        </StatusRight>
      </StatusBar>

      <Taskbar>
        <StartButton><svg width="16" height="16"><path d="M0 2.300L6.500 1.400V7.500H0ZM7.500 1.200L16 0V7.500H7.500ZM0 8.500H6.500V14.600L0 13.700ZM7.500 8.500H16V16L7.500 14.800Z" fill="#000" /></svg></StartButton>
        <SearchBox><SearchArt /><SearchText><Fit w={44}>Search</Fit></SearchText><Sparkles /></SearchBox>
        {taskIcons.map((t, i) => <TaskItem key={i} $on={t.on} $line={t.line}>{t.art}</TaskItem>)}
        <Tray>
          <TrayItem $w={24}><svg width="12" height="7" fill="none" stroke="#111" strokeWidth="1.300"><path d="M.5 6.500L6 1L11.500 6.500" /></svg></TrayItem>
          <TrayItem $w={24}><svg width="12" height="16" fill="none" stroke="#111" strokeWidth="1.200"><rect x="1.500" y="4.500" width="7" height="7" rx="1" /><path d="M8.500 7L11 5.500V10.500L8.500 9M2 2Q6-.5 9 2M2 14Q6 16.500 9 14" /></svg></TrayItem>
          <TrayItem $w={24}><svg width="17" height="14"><path d="M3.500 10.500Q.5 10.500.5 7.500Q1 5 3.500 5Q5 1 8.500 1.500Q11.500 2 12 5Q15.500 5.500 15 9L8 10.500Z" fill="#8b8b8b" stroke="#333" /><circle cx="11.500" cy="9.500" r="4.500" fill="#e5eef7" /><path d="M8.500 9Q11 5.500 14 8M14.500 6V8.500H12M14.500 10.500Q12 13.500 9 11.500M8.500 13V10.500H11" stroke="#1a6fc4" strokeWidth="1.200" fill="none" /></svg></TrayItem>
          <TrayItem $w={24}><svg width="17" height="13" fill="none" stroke="#111"><path d="M5 4.500H14.500V10.500H5.500V7M14.500 6.500H16V9" /><path d="M6.500 6H13V9H7.500Z" fill="#111" stroke="#111" strokeWidth=".6" /><path d="M1.500 0V2M4.500 0V2M0 2.500H6M1 3V4.500H5V3M3 5V7.500" strokeWidth="1.300" /></svg></TrayItem>
          <TrayItem $w={24}><svg width="14" height="13" fill="none" stroke="#333"><path d="M1 11Q2 2 13 1" stroke="#8a9095" /><path d="M3.500 12Q4.500 5 13 4M6.500 12.500Q7 8 13 7" /><path d="M9 13Q9.500 10 13 9.500V13Z" fill="#222" stroke="none" /></svg></TrayItem>
          <TrayItem $w={24}><svg width="17" height="13" fill="none" stroke="#111"><path d="M1 4.500H3.500L7 1V12L3.500 8.500H1ZM9 4.500Q10.500 6.500 9 8.500M11 2.500Q14 6.500 11 10.500M13.500 1Q17.500 6.500 13.500 12" /></svg></TrayItem>
          <TrayItem $w={60}><Fit w={42}>3:49 PM</Fit></TrayItem>
          <TrayItem $w={42}><svg width="16" height="16"><path d="M0 0H16V13H11L8 16L5 13H0Z" fill="#111" /><path d="M3 4H13M3 7H13M3 10H9" stroke="#dfe5e9" /></svg></TrayItem>
          <TrayItem $w={7} />
          <ShowDesktop />
        </Tray>
      </Taskbar>
    </Window>
  );
}
